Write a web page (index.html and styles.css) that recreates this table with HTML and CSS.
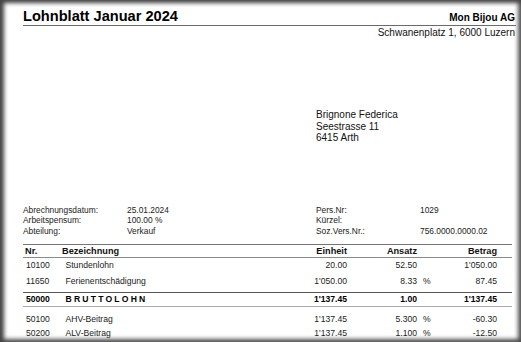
FILE: index.html
```html
<!DOCTYPE html>
<html lang="de">
<head>
<meta charset="utf-8">
<title>Lohnblatt Januar 2024</title>
<link rel="stylesheet" href="styles.css">
</head>
<body>
<div class="page">
  <div class="head">
    <div class="title">Lohnblatt Januar 2024</div>
    <div class="company">Mon Bijou AG</div>
  </div>
  <div class="company-addr">Schwanenplatz 1, 6000 Luzern</div>

  <div class="address">
    <div>Brignone Federica</div>
    <div>Seestrasse 11</div>
    <div>6415 Arth</div>
  </div>

  <div class="info">
    <div>Abrechnungsdatum:</div><div>25.01.2024</div><div>Pers.Nr:</div><div>1029</div>
    <div>Arbeitspensum:</div><div>100.00 %</div><div>Kürzel:</div><div></div>
    <div>Abteilung:</div><div>Verkauf</div><div>Soz.Vers.Nr.:</div><div>756.0000.0000.02</div>
  </div>

  <div class="table">
    <div class="row hdr">
      <div class="c-nr">Nr.</div><div class="c-bez">Bezeichnung</div><div class="c-num">Einheit</div><div class="c-num">Ansatz</div><div class="c-pct"></div><div class="c-num">Betrag</div>
    </div>
    <div class="group g1">
      <div class="row">
        <div class="c-nr">10100</div><div class="c-bez">Stundenlohn</div><div class="c-num">20.00</div><div class="c-num">52.50</div><div class="c-pct"></div><div class="c-num">1'050.00</div>
      </div>
      <div class="row">
        <div class="c-nr">11650</div><div class="c-bez">Ferienentschädigung</div><div class="c-num">1'050.00</div><div class="c-num">8.33</div><div class="c-pct">%</div><div class="c-num">87.45</div>
      </div>
    </div>
    <div class="row total">
      <div class="c-nr">50000</div><div class="c-bez spaced">BRUTTOLOHN</div><div class="c-num">1'137.45</div><div class="c-num">1.00</div><div class="c-pct"></div><div class="c-num">1'137.45</div>
    </div>
    <div class="group g2">
      <div class="row">
        <div class="c-nr">50100</div><div class="c-bez">AHV-Beitrag</div><div class="c-num">1'137.45</div><div class="c-num">5.300</div><div class="c-pct">%</div><div class="c-num">-60.30</div>
      </div>
      <div class="row">
        <div class="c-nr">50200</div><div class="c-bez">ALV-Beitrag</div><div class="c-num">1'137.45</div><div class="c-num">1.100</div><div class="c-pct">%</div><div class="c-num">-12.50</div>
      </div>
    </div>
  </div>
</div>
</body>
</html>
```

FILE: styles.css
```css
html, body {
  margin: 0;
  padding: 0;
  background: #fff;
}
body {
  font-family: "Liberation Sans", Arial, sans-serif;
  color: #1a1a1a;
}
.page {
  width: 521px;
  height: 342px;
  box-sizing: border-box;
  padding: 8px 5px 0 23px;
  overflow: hidden;
  background: #fff;
  box-shadow: inset 3px 2px 4px 1px #444, inset -2px -2px 4px 1px #555;
}
.head {
  display: flex;
  justify-content: space-between;
  align-items: baseline;
  border-bottom: 1px solid #6a6a6a;
}
.title {
  font-size: 14.6px;
  font-weight: bold;
  line-height: 17px;
  color: #000;
}
.company {
  font-size: 10px;
  font-weight: bold;
  color: #000;
  padding-right: 1px;
}
.company-addr {
  font-size: 10px;
  line-height: 12px;
  margin-top: 1px;
  text-align: right;
  padding-right: 1px;
  color: #111;
}
.address {
  margin: 70px 0 0 293px;
  font-size: 10px;
  line-height: 11.5px;
  color: #111;
}
.info {
  margin-top: 61px;
  display: grid;
  grid-template-columns: 104px 189px 104px 1fr;
  font-size: 8.4px;
  line-height: 10.7px;
  color: #222;
}
.table {
  margin-top: 7px;
  width: 489px;
  font-size: 8.6px;
  color: #222;
}
.row {
  display: grid;
  grid-template-columns: 37px 207px 80px 70px 30px 50px 15px;
  align-items: center;
  height: 15.5px;
}
.c-nr { padding-left: 3px; }
.c-bez { padding-left: 5.5px; }
.c-num { text-align: right; }
.c-pct { padding-left: 6px; }
.hdr {
  height: 12px;
  border-top: 1.5px solid #777;
  border-bottom: 1px solid #8a8a8a;
  font-weight: bold;
  font-size: 9.2px;
  color: #111;
}
.hdr .c-nr { padding-left: 2px; }
.hdr .c-bez { padding-left: 2px; }
.g1 { padding-bottom: 3px; }
.total {
  height: 13px;
  border-top: 1.5px solid #555;
  border-bottom: 1px solid #aaa;
  font-weight: bold;
  color: #000;
}
.spaced { letter-spacing: 2.2px; }
.g2 { padding-top: 5px; }
.g2 .row { height: 14px; }
```
